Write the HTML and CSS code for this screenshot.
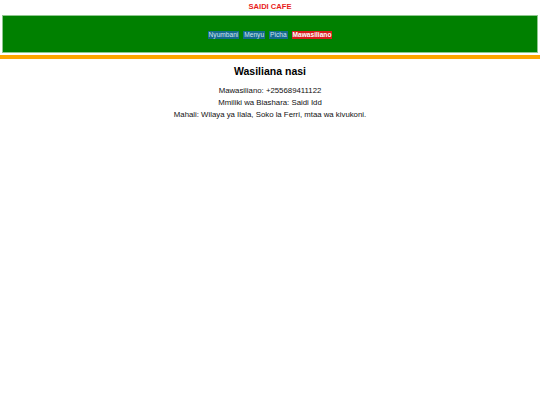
FILE: index.html
```html
<!DOCTYPE html>
<html lang="sw">
<head>
<meta charset="utf-8">
<title>Saidi Cafe - Mawasiliano</title>
<link rel="stylesheet" href="styles.css">
</head>
<body>
<header class="site-header">
  <h1 class="brand">SAIDI CAFE</h1>
  <nav class="nav-bar">
    <a class="nav-link" href="#">Nyumbani</a>
    <a class="nav-link" href="#">Menyu</a>
    <a class="nav-link" href="#">Picha</a>
    <a class="nav-link active" href="#">Mawasiliano</a>
  </nav>
</header>
<main class="contact">
  <h2 class="contact-title">Wasiliana nasi</h2>
  <p class="contact-line">Mawasiliano: +255689411122</p>
  <p class="contact-line">Mmiliki wa Biashara: Saidi Idd</p>
  <p class="contact-line">Mahali: Wilaya ya Ilala, Soko la Ferri, mtaa wa kivukoni.</p>
</main>
</body>
</html>
```

FILE: styles.css
```css
html, body {
  margin: 0;
  padding: 0;
  background: #ffffff;
  font-family: "Liberation Sans", Arial, sans-serif;
}

.site-header {
  padding-bottom: 2px;
  border-bottom: 4px solid #ffa500;
}

.brand {
  margin: 0;
  height: 15px;
  line-height: 13px;
  text-align: center;
  font-size: 7.6px;
  font-weight: bold;
  color: #e81c1c;
}

.nav-bar {
  margin: 0 2px;
  height: 35px;
  background: #008000;
  border: 1px solid #8fc88f;
  display: flex;
  justify-content: center;
  align-items: center;
  gap: 4px;
  padding-top: 1px;
  box-sizing: content-box;
}

.nav-link {
  font-size: 6.6px;
  line-height: 8px;
  padding: 0 1px;
  color: #cfe4f2;
  background: #156a8c;
  text-decoration: none;
}

.nav-link.active {
  background: #d81e1e;
  color: #ffffff;
  font-weight: bold;
}

.contact {
  text-align: center;
  padding-top: 4px;
}

.contact-title {
  margin: 0 0 6px;
  font-size: 10.5px;
  line-height: 16px;
  font-weight: bold;
  color: #000000;
}

.contact-line {
  margin: 0;
  font-size: 7.8px;
  line-height: 12px;
  color: #111111;
}
```
